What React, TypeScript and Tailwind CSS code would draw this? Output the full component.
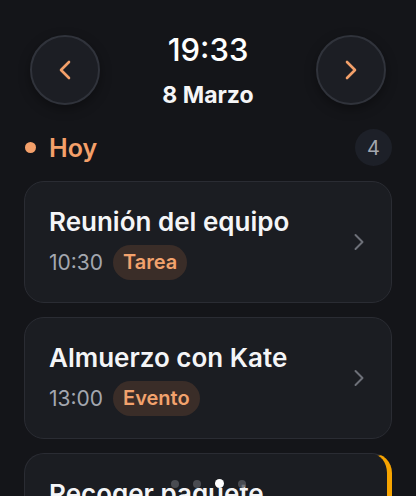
import { ChevronRight } from "lucide-react";

type Item = {
  title: string;
  time: string;
  kind: string;
  accent?: boolean;
};

const items: Item[] = [
  { title: "Reunión del equipo", time: "10:30", kind: "Tarea" },
  { title: "Almuerzo con Kate", time: "13:00", kind: "Evento" },
  { title: "Recoger paquete", time: "17:00", kind: "Tarea", accent: true },
];

function NavButton({ dir }: { dir: "left" | "right" }) {
  return (
    <button
      type="button"
      className="flex h-[70px] w-[70px] items-center justify-center rounded-full border-2 border-[#30333b] bg-[#1c1e24] shadow-[0_4px_12px_rgba(0,0,0,0.35)]"
    >
      <svg width="14" height="20" viewBox="0 0 14 20" fill="none">
        <polyline
          points={dir === "left" ? "11,2 3,10 11,18" : "3,2 11,10 3,18"}
          stroke="#f3a06a"
          strokeWidth="2.6"
          strokeLinecap="round"
          strokeLinejoin="round"
        />
      </svg>
    </button>
  );
}

function EventCard({ item }: { item: Item }) {
  return (
    <div
      className={`flex items-center justify-between rounded-[20px] border border-[#2a2c33] bg-[#1b1d22] pl-[24px] pr-[18px] ${
        item.accent ? "border-r-[5px] border-r-[#f7a400]" : ""
      }`}
    >
      <div className="pt-[25px] pb-[22px]">
        <p className="text-[26px] font-semibold leading-[30px] text-[#f4f5f7]">{item.title}</p>
        <div className="mt-[8px] flex items-center gap-[10px]">
          <span className="text-[21px] leading-[35px] text-[#a3a7af]">{item.time}</span>
          <span className="rounded-full bg-[#3a2d28] px-[10px] text-[20px] font-semibold leading-[35px] text-[#f2a26d]">
            {item.kind}
          </span>
        </div>
      </div>
      <ChevronRight size={28} strokeWidth={1.7} className="text-[#6d7078]" />
    </div>
  );
}

export default function App() {
  return (
    <div className="relative h-[496px] w-[416px] overflow-hidden bg-[#141519] font-['Inter',sans-serif]">
      <header className="flex items-center justify-between px-[30px] pt-[30px]">
        <NavButton dir="left" />
        <div className="flex flex-col items-center">
          <span className="text-[31px] font-medium leading-[40px] text-white">19:33</span>
          <span className="mt-[11px] text-[23px] font-bold leading-[28px] text-[#f4f5f7]">8 Marzo</span>
        </div>
        <NavButton dir="right" />
      </header>

      <section className="px-6">
        <div className="mt-[20px] flex items-center justify-between">
          <div className="flex items-center gap-[13px]">
            <span className="ml-[1px] h-[11px] w-[11px] rounded-full bg-[#f4a06a]" />
            <h2 className="text-[25px] font-semibold leading-[36px] text-[#f4a06a]">Hoy</h2>
          </div>
          <span className="flex h-[37px] w-[37px] items-center justify-center rounded-full bg-[#1d2028] text-[20px] text-[#a3a7af]">
            4
          </span>
        </div>

        <div className="mt-[15px] flex flex-col gap-[14px]">
          {items.map((item) => (
            <EventCard key={item.title} item={item} />
          ))}
        </div>
      </section>

      <div className="absolute left-[171px] top-[479px] flex items-center gap-[14px]">
        <span className="h-[8px] w-[8px] rounded-full bg-[#55575e]/80" />
        <span className="h-[8px] w-[8px] rounded-full bg-[#55575e]/80" />
        <span className="h-[9px] w-[9px] rounded-full bg-white" />
        <span className="h-[8px] w-[8px] rounded-full bg-[#55575e]/80" />
      </div>
    </div>
  );
}
